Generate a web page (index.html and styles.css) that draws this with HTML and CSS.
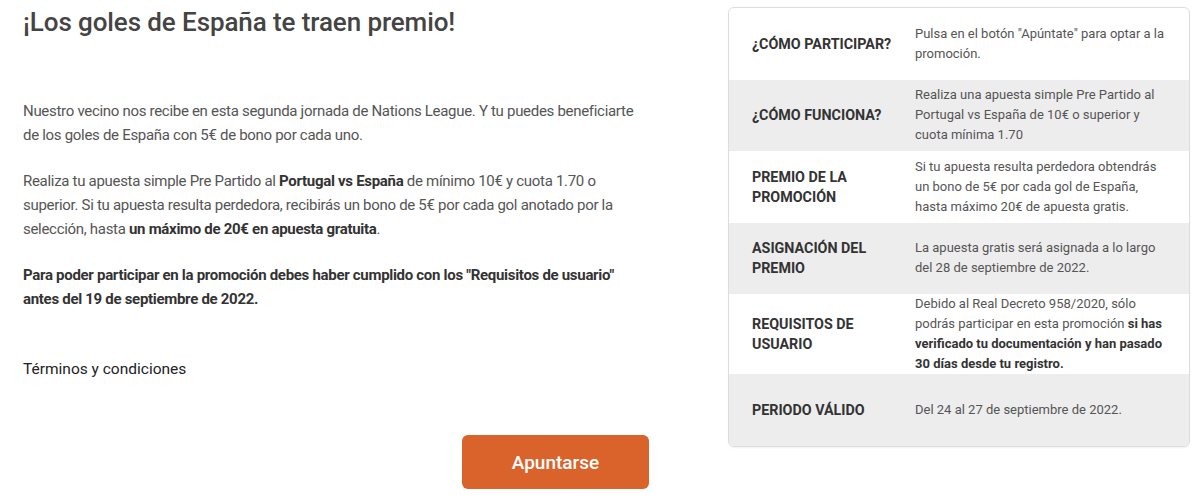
FILE: index.html
```html
<!DOCTYPE html>
<html lang="es">
<head>
    <meta charset="UTF-8">
    <title>¡Los goles de España te traen premio!</title>
    <link rel="stylesheet" href="styles.css">
</head>
<body>
    <div class="page">
        <div class="main">
            <h1 class="title">¡Los goles de España te traen premio!</h1>

            <p class="text">Nuestro vecino nos recibe en esta segunda jornada de Nations League. Y tu puedes beneficiarte de los goles de España con 5€ de bono por cada uno.</p>

            <p class="text">Realiza tu apuesta simple Pre Partido al <b>Portugal vs España</b> de mínimo 10€ y cuota 1.70 o superior. Si tu apuesta resulta perdedora, recibirás un bono de 5€ por cada gol anotado por la selección, hasta <b>un máximo de 20€ en apuesta gratuita</b>.</p>

            <p class="text"><b>Para poder participar en la promoción debes haber cumplido con los "Requisitos de usuario" antes del 19 de septiembre de 2022.</b></p>

            <a class="terms" href="#">Términos y condiciones</a>

            <div class="actions">
                <button class="btn">Apuntarse</button>
            </div>
        </div>

        <div class="card">
            <div class="row">
                <div class="label">¿Cómo participar?</div>
                <div class="value">Pulsa en el botón "Apúntate" para optar a la promoción.</div>
            </div>
            <div class="row">
                <div class="label">¿Cómo funciona?</div>
                <div class="value">Realiza una apuesta simple Pre Partido al Portugal vs España de 10€ o superior y cuota mínima 1.70</div>
            </div>
            <div class="row">
                <div class="label">Premio de la promoción</div>
                <div class="value">Si tu apuesta resulta perdedora obtendrás un bono de 5€ por cada gol de España, hasta máximo 20€ de apuesta gratis.</div>
            </div>
            <div class="row">
                <div class="label">Asignación del premio</div>
                <div class="value">La apuesta gratis será asignada a lo largo del 28 de septiembre de 2022.</div>
            </div>
            <div class="row">
                <div class="label">Requisitos de usuario</div>
                <div class="value">Debido al Real Decreto 958/2020, sólo podrás participar en esta promoción <b>si has verificado tu documentación y han pasado 30 días desde tu registro.</b></div>
            </div>
            <div class="row">
                <div class="label">Periodo válido</div>
                <div class="value">Del 24 al 27 de septiembre de 2022.</div>
            </div>
        </div>
    </div>
</body>
</html>
```

FILE: styles.css
```css
*{
    margin: 0;
    padding: 0;
    box-sizing: border-box;
}

body{
    font-family: Roboto, "Noto Sans", sans-serif;
    color: #555;
    background: #fff;
}

.page{
    display: flex;
    align-items: flex-start;
    padding: 7px 10px 0 23px;
}

/* columna izquierda */
.main{
    width: 680px;
    flex-shrink: 0;
}

.title{
    margin-top: 0;
    font-size: 26px;
    line-height: 31px;
    font-weight: 500;
    color: #444;
    letter-spacing: -0.1px;
}

.text{
    margin-top: 61px;
    font-size: 15px;
    line-height: 24px;
    letter-spacing: -0.3px;
    max-width: 625px;
}
.text + .text{
    margin-top: 22px;
}
.text b{
    color: #333;
    font-weight: 700;
}

.terms{
    display: block;
    margin-top: 46px;
    font-size: 15.5px;
    line-height: 24px;
    color: #222;
    text-decoration: none;
}

.actions{
    display: flex;
    padding-left: 439px;
    margin-top: 54px;
}

.btn{
    width: 187px;
    height: 54px;
    border: none;
    border-radius: 6px;
    background: #da622b;
    color: #fff;
    font-family: Roboto, sans-serif;
    font-size: 19px;
    font-weight: 500;
}

/* tarjeta derecha */
.card{
    margin-left: 25px;
    width: 463px;
    border: 1px solid #ddd;
    border-radius: 6px;
    overflow: hidden;
    box-shadow: 0 1px 2px rgba(0,0,0,0.06);
}

.row{
    display: grid;
    grid-template-columns: 163px 1fr;
    align-items: center;
    min-height: 71.5px;
    padding: 0 22px 0 23px;
}
.row:nth-child(even){
    background: #ededed;
}

.label{
    text-transform: uppercase;
    font-size: 14.3px;
    font-weight: 700;
    line-height: 20px;
    color: #333;
    padding-right: 12px;
}

.value{
    font-size: 13px;
    line-height: 20px;
    color: #555;
}
.value b{
    color: #333;
}
```
